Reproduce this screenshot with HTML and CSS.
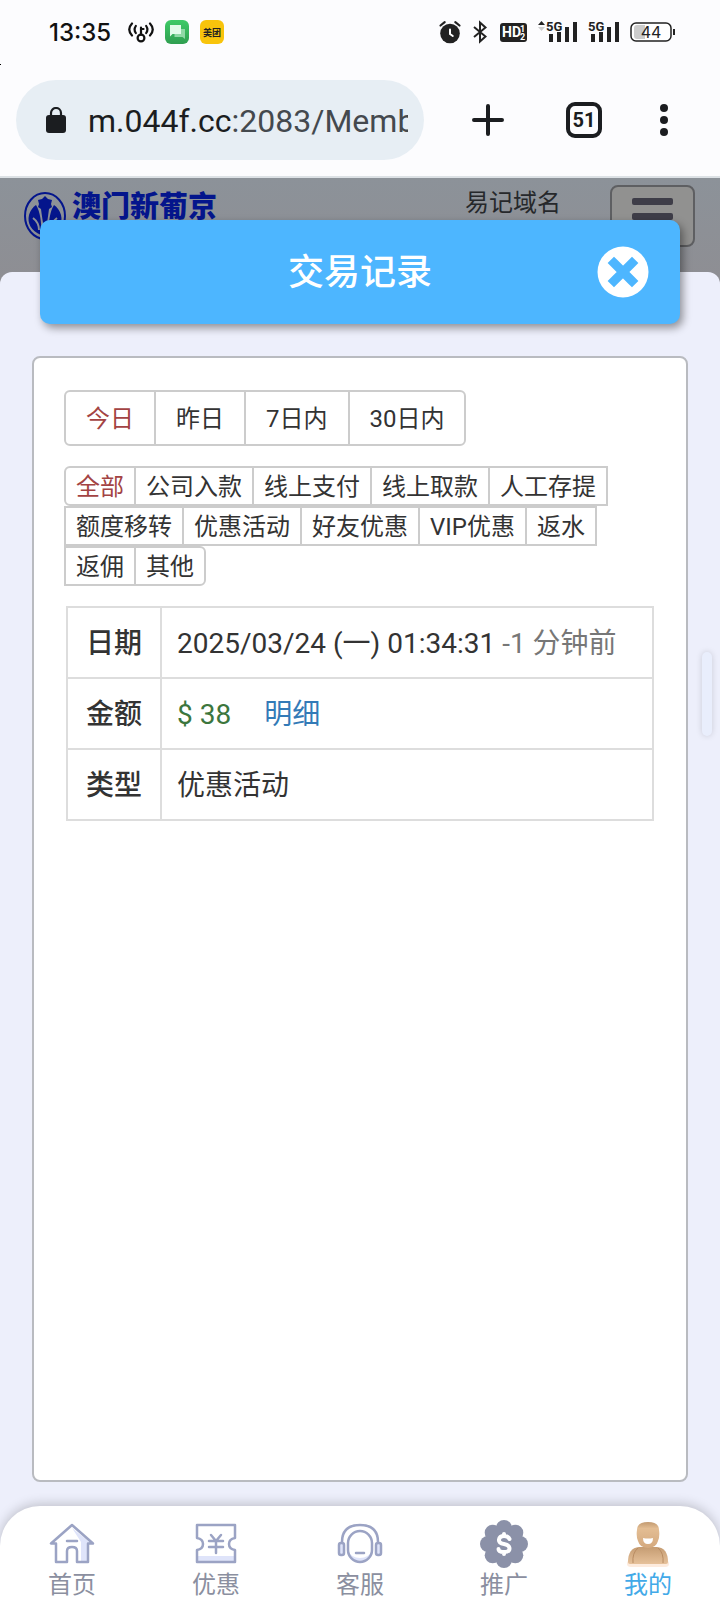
FILE: index.html
```html
<!DOCTYPE html>
<html lang="zh-CN">
<head>
    <meta charset="UTF-8">
    <meta name="viewport" content="width=device-width, initial-scale=1.0">
    <title>交易记录</title>
    <link rel="stylesheet" href="styles.css">
</head>
<body>
    <div class="status-bar">
        <span class="time">13:35</span>
        <svg class="icon-key" width="26" height="24" viewBox="0 0 26 24" fill="none" stroke="#111" stroke-width="2.200" stroke-linecap="round">
            <circle cx="13" cy="18" r="3.400"/>
            <path d="M13 14.500V7.500M13 9h2.500"/>
            <path d="M7.800 6q-2.400 3.500 0 7M18.200 6q2.400 3.500 0 7M4 3.500q-5.500 6 0 12M22 3.500q5.500 6 0 12"/>
        </svg>
        <svg width="24" height="24" viewBox="0 0 24 24">
            <defs>
                <linearGradient id="chat" x1="0" y1="0" x2="0" y2="1">
                    <stop offset="0" stop-color="#3fcb67"/>
                    <stop offset="1" stop-color="#2f9e50"/>
                </linearGradient>
            </defs>
            <rect width="24" height="24" rx="6" fill="url(#chat)"/>
            <path d="M9.500 9h10.500v10l-2.500-2h-8z" fill="#8fd9a5"/>
            <path d="M5 5h11v9H7.500L5 16.500z" fill="#e2fbe9"/>
        </svg>
        <svg width="24" height="24" viewBox="0 0 24 24">
            <rect width="24" height="24" rx="6" fill="#f8c40c"/>
            <text class="app-text" x="12" y="16" text-anchor="middle">美团</text>
        </svg>
        <div class="status-right">
            <svg width="24" height="24" viewBox="0 0 24 24">
                <circle cx="12" cy="13.500" r="9.800" fill="#222"/>
                <path d="M2.500 5.500l4.200-3.300M21.500 5.500l-4.200-3.300" stroke="#222" stroke-width="2.200" stroke-linecap="round"/>
                <path d="M12 9.500v4.500l2.800 2" stroke="#fff" stroke-width="2" fill="none" stroke-linecap="round"/>
            </svg>
            <svg width="16" height="24" viewBox="0 0 16 24" fill="none" stroke="#222" stroke-width="2">
                <path d="M2 7l11.500 9.500L8 21.500v-19L13.500 7.500 2 17"/>
            </svg>
            <svg width="30" height="24" viewBox="0 0 30 24">
                <rect x="2" y="3" width="27" height="19" rx="3" fill="#222"/>
                <text class="hd-text" x="4" y="17">HD</text>
                <text class="hd-small" x="22" y="12">1</text>
                <text class="hd-small" x="22" y="20">2</text>
            </svg>
            <svg width="40" height="24" viewBox="0 0 40 24">
                <path d="M0 5l3.500-4L7 5z" fill="#222"/>
                <path d="M0 7h7l-3.500 4z" fill="#ccc"/>
                <text class="net-text" x="8" y="11">5G</text>
                <path d="M11 14h4v8h-4zM19 12h4v10h-4zM27 7h4v15h-4zM35 2h4v20h-4z" fill="#222"/>
            </svg>
            <svg width="32" height="24" viewBox="0 0 32 24">
                <text class="net-text" x="0" y="11">5G</text>
                <path d="M3 14h4v8H3zM11 12h4v10h-4zM19 7h4v15h-4zM27 2h4v20h-4z" fill="#222"/>
            </svg>
            <svg width="46" height="24" viewBox="0 0 46 24">
                <rect x="1" y="3" width="40" height="18" rx="5" fill="#fff" stroke="#222" stroke-width="1.500"/>
                <path d="M7 5h8v14H7q-3 0-3-3V8q0-3 3-3z" fill="#ccc"/>
                <path d="M44 9v6" stroke="#222" stroke-width="2"/>
                <text class="battery-text" x="21" y="18" text-anchor="middle">44</text>
            </svg>
        </div>
    </div>

    <div class="toolbar">
        <div class="address">
            <svg width="20" height="26" viewBox="0 0 20 26">
                <path d="M5 10V6a5 5 0 0 1 10 0v4" fill="none" stroke="#1b1d20" stroke-width="2.200"/>
                <rect y="8" width="20" height="18" rx="3" fill="#1b1d20"/>
            </svg>
            <span class="url">m.044f.cc<span class="path">:2083/Memb</span></span>
        </div>
        <button class="tool" aria-label="新标签页">
            <svg width="32" height="32" viewBox="0 0 32 32" stroke="#1b1d20" stroke-width="4" stroke-linecap="round">
                <path d="M16 2v28M2 16h28"/>
            </svg>
        </button>
        <button class="tool"><span class="tab-count">51</span></button>
        <button class="tool tool-menu" aria-label="菜单">
            <svg width="8" height="32" viewBox="0 0 8 32" fill="#1b1d20">
                <circle cx="4" cy="4" r="4"/>
                <circle cx="4" cy="16" r="4"/>
                <circle cx="4" cy="28" r="4"/>
            </svg>
        </button>
    </div>

    <header class="site-header">
        <a class="logo" href="#">
            <svg width="42" height="48" viewBox="0 0 42 48">
                <ellipse cx="21" cy="24" rx="20" ry="23" fill="none" stroke="#04158c" stroke-width="2"/>
                <path d="M21 4l3 3 4 1-1 4 1 3-3 2c-1 8-2 15-4 23-2-8-3-15-4-23l-3-2 1-3-1-4 4-1z" fill="#04158c"/>
                <path d="M12 13c4 6 6 18 5 30C7 39 3 31 5 23c1-4 4-8 7-10zM30 13c-4 6-6 18-5 30 10-4 14-12 12-20-1-4-4-8-7-10z" fill="#04158c"/>
                <path d="M9 26c4 3 6 7 6 12M33 26c-4 3-6 7-6 12" stroke="#8d9198" stroke-width="2" fill="none"/>
            </svg>
            <span>澳门新葡京</span>
        </a>
        <a class="domain" href="#">易记域名</a>
        <button class="hamburger" aria-label="导航">
            <span></span><span></span><span></span>
        </button>
    </header>

    <main class="sheet">
        <div class="title-bar">
            <h1>交易记录</h1>
            <button class="close" aria-label="关闭">
                <svg width="52" height="52" viewBox="0 0 52 52">
                    <circle cx="26" cy="26" r="25.500" fill="#fff"/>
                    <path d="M17 17l18 18M35 17L17 35" stroke="#4db6ff" stroke-width="9" stroke-linecap="square" stroke-linejoin="round"/>
                </svg>
            </button>
        </div>

        <div class="panel">
            <div class="btn-group days">
                <button class="active">今日</button><button>昨日</button><button>7日内</button><button>30日内</button>
            </div>
            <div class="btn-group types">
                <button class="active">全部</button><button>公司入款</button><button>线上支付</button><button>线上取款</button><button>人工存提</button><button>额度移转</button><button>优惠活动</button><button>好友优惠</button><button>VIP优惠</button><button>返水</button><button>返佣</button><button>其他</button>
            </div>
            <table class="record">
                <tr>
                    <th scope="row">日期</th>
                    <td>2025/03/24 (一) 01:34:31 <span class="ago">-1 分钟前</span></td>
                </tr>
                <tr>
                    <th scope="row">金额</th>
                    <td><span class="amount">$ 38</span><a class="detail" href="#">明细</a></td>
                </tr>
                <tr>
                    <th scope="row">类型</th>
                    <td>优惠活动</td>
                </tr>
            </table>
        </div>
        <div class="side-handle"></div>
    </main>

    <nav class="tab-bar">
        <a href="#">
            <svg width="48" height="48" viewBox="0 0 48 48" fill="none" stroke="#9ba3c4" stroke-width="2.500" stroke-linejoin="round" stroke-linecap="round">
                <path d="M24 8l20 16h-4v18h-7V22z" fill="#dfe4fa" stroke="none"/>
                <path d="M24 5L3 23.500h5V42h11V31q0-4 5-4t5 4v11h11V23.500h5z"/>
                <path d="M19 21h10"/>
            </svg>
            首页
        </a>
        <a href="#">
            <svg width="48" height="48" viewBox="0 0 48 48" fill="none" stroke="#9ba3c4" stroke-width="2.500" stroke-linejoin="round" stroke-linecap="round">
                <path d="M5 36h38v6H5z" fill="#dfe4fa" stroke="none"/>
                <path d="M5 5h38v13q-6 1-6 6t6 6v12H5V30q6-1 6-6t-6-6z"/>
                <path d="M19 15l5 6 5-6M24 21v12M17 21h14M17 27h14"/>
            </svg>
            优惠
        </a>
        <a href="#">
            <svg width="48" height="48" viewBox="0 0 48 48" fill="none" stroke="#9ba3c4" stroke-width="2.500" stroke-linecap="round">
                <path d="M12 30q3 8 12 8t12-8q0 12-12 12T12 30z" fill="#dfe4fa" stroke="none"/>
                <rect x="12" y="11" width="24" height="31" rx="12"/>
                <path d="M6 22C6 11 12 5 24 5s18 6 18 17"/>
                <rect x="3" y="23" width="5" height="12" rx="2" fill="#dfe4fa"/>
                <rect x="40" y="23" width="5" height="12" rx="2" fill="#dfe4fa"/>
                <path d="M20 33h8"/>
            </svg>
            客服
        </a>
        <a href="#">
            <svg width="48" height="48" viewBox="0 0 48 48">
                <g fill="#8b91a8">
                    <circle cx="24" cy="24" r="18"/>
                    <circle cx="24" cy="8" r="8"/>
                    <circle cx="24" cy="40" r="8"/>
                    <circle cx="8" cy="24" r="8"/>
                    <circle cx="40" cy="24" r="8"/>
                    <circle cx="12.700" cy="12.700" r="8"/>
                    <circle cx="35.300" cy="12.700" r="8"/>
                    <circle cx="12.700" cy="35.300" r="8"/>
                    <circle cx="35.300" cy="35.300" r="8"/>
                </g>
                <path d="M29.500 19q-1-3-5.500-3t-5 3.500 5 4.500 5.500 4.500-5.500 3.500-5.500-3M24 14v2M24 32v2" fill="none" stroke="#fff" stroke-width="4" stroke-linecap="round"/>
            </svg>
            推广
        </a>
        <a href="#" class="current">
            <svg width="48" height="48" viewBox="0 0 48 48">
                <defs>
                    <linearGradient id="skin" x1="0" y1="0" x2="0" y2="1">
                        <stop offset="0" stop-color="#c29a70"/>
                        <stop offset=".25" stop-color="#e3bd93"/>
                        <stop offset="1" stop-color="#d4a97e"/>
                    </linearGradient>
                    <linearGradient id="shirt" x1="0" y1="0" x2="0" y2="1">
                        <stop offset="0" stop-color="#c59c72"/>
                        <stop offset="1" stop-color="#e6c19a"/>
                    </linearGradient>
                </defs>
                <path d="M3 44q0-4 4-4h34q4 0 4 4 0 3-4 3H7q-4 0-4-3z" fill="#fdebdd"/>
                <path d="M4 42q0-14 11-15h18q11 1 11 15 0 2-2 2H6q-2 0-2-2z" fill="url(#shirt)"/>
                <path d="M9 43q-1-10 5-15M39 43q1-10-5-15" fill="none" stroke="#b98c62" stroke-width="1"/>
                <path d="M24 2q11 0 11 8 1 6-1 11-2 7-10 7t-10-7q-2-5-1-11 0-8 11-8z" fill="url(#skin)"/>
                <path d="M19 18q5 1 10 0 0 6-5 6t-5-6z" fill="#fff"/>
            </svg>
            我的
        </a>
    </nav>
</body>
</html>
```

FILE: styles.css
```css
* {
    box-sizing: border-box;
}
body {
    margin: 0;
    min-height: 100vh;
    display: flex;
    flex-direction: column;
    font-family: Roboto, "Noto Sans CJK SC", sans-serif;
    font-size: 24px;
    color: #333;
    background-color: #edeffb;
}
button {
    margin: 0;
    padding: 0;
    border: none;
    background: none;
    font: inherit;
    color: inherit;
    cursor: pointer;
}
a {
    text-decoration: none;
    color: inherit;
}
svg {
    display: block;
    flex: none;
}

/* phone status bar */
.status-bar {
    display: flex;
    align-items: center;
    gap: 11px;
    height: 64px;
    padding: 0 44px 0 49px;
    background-color: #fcfcfe;
}
.time {
    font-family: Inter, sans-serif;
    font-weight: 500;
    color: #111;
}
.icon-key {
    margin-left: 6px;
}
.status-right {
    display: flex;
    gap: 10px;
    margin-left: auto;
}
.app-text {
    font-size: 9px;
    font-weight: 700;
    fill: #222;
}
.hd-text {
    font-size: 14px;
    font-weight: 700;
    fill: #fff;
}
.hd-small {
    font-size: 9px;
    font-weight: 700;
    fill: #fff;
}
.net-text {
    font-size: 13px;
    font-weight: 700;
    fill: #222;
}
.battery-text {
    font-family: Inter, sans-serif;
    font-size: 16px;
    fill: #222;
}

/* browser toolbar */
.toolbar {
    display: flex;
    padding: 16px 24px 16px 16px;
    background-color: #fcfcfe;
    border-bottom: 2px solid #dce1e5;
}
/* short dark tick on the left edge */
.toolbar::before {
    content: "";
    position: absolute;
    top: 64px;
    left: 0;
    width: 1px;
    height: 1px;
    background-color: #000;
}
.address {
    flex: 1;
    min-width: 0;
    display: flex;
    align-items: center;
    gap: 22px;
    height: 80px;
    margin-right: 16px;
    padding: 0 16px 0 30px;
    border-radius: 40px;
    background-color: #e7eef4;
}
.url {
    flex: 1;
    min-width: 0;
    overflow: hidden;
    white-space: nowrap;
    font-size: 32px;
    line-height: 40px;
    padding-top: 2px;
    color: #1b1d20;
}
.path {
    color: #44494e;
}
.tool {
    display: flex;
    align-items: center;
    justify-content: center;
    width: 96px;
}
.tool-menu {
    width: 64px;
}
.tab-count {
    width: 36px;
    height: 36px;
    border: 4px solid #1b1d20;
    border-radius: 9px;
    font-size: 20px;
    font-weight: 700;
    line-height: 28px;
    color: #1b1d20;
}

/* dimmed site header */
.site-header {
    display: flex;
    align-items: flex-start;
    height: 106px;
    margin-bottom: -12px;
    padding: 7px 25px 0 24px;
    background: linear-gradient(#8c9299, #8e8e93);
}
.logo {
    display: flex;
    gap: 6px;
    margin: 7px auto 0 0;
    font-size: 29px;
    font-weight: 900;
    line-height: 30px;
    color: #04158c;
}
.domain {
    margin: 4px 49px 0 0;
    line-height: 28px;
    color: #26282b;
}
.hamburger {
    display: flex;
    flex-direction: column;
    align-items: center;
    gap: 8px;
    width: 85px;
    height: 62px;
    padding-top: 11px;
    border: 2px solid #5e5f62;
    border-radius: 8px;
    background-color: #919190;
}
.hamburger span {
    width: 41px;
    height: 7px;
    border-radius: 2px;
    background-color: #3e3d48;
}

/* modal sheet */
.sheet {
    position: relative;
    flex: 1;
    display: flex;
    flex-direction: column;
    padding: 0 32px 24px;
    border-radius: 12px 12px 0 0;
    background-color: #edeffb;
}
.title-bar {
    display: grid;
    grid-template-columns: 1fr auto 1fr;
    align-items: center;
    height: 104px;
    margin: -52px 8px 32px;
    padding: 0 31px;
    border-radius: 10px;
    background-color: #4db6ff;
    box-shadow: 3px 4px 8px rgba(0,0,0,0.4);
}
.title-bar h1 {
    grid-column: 2;
    margin: 0;
    padding-top: 2px;
    font-size: 36px;
    font-weight: 500;
    line-height: 48px;
    color: #fff;
}
.close {
    justify-self: end;
}
.panel {
    flex: 1;
    padding: 32px 30px;
    border: 2px solid #b9bbc0;
    border-radius: 8px;
    background-color: #fff;
}
.side-handle {
    position: absolute;
    top: 380px;
    right: 8px;
    width: 10px;
    height: 84px;
    border-radius: 5px;
    background-color: #e9eefc;
    box-shadow: 0 0 6px rgba(0,0,0,0.15);
}

/* filter buttons */
.btn-group {
    display: flex;
    flex-wrap: wrap;
    margin-bottom: 20px;
}
.btn-group button {
    height: 40px;
    margin-right: -2px;
    padding: 2px 10px 0;
    border: 2px solid #ccc;
    line-height: 34px;
}
.btn-group.days button {
    height: 56px;
    padding: 2px 20px 0;
    line-height: 50px;
}
.btn-group .active {
    color: #a34343;
}
.btn-group button:first-child {
    border-radius: 6px 0 0 6px;
}
.btn-group button:last-child {
    border-radius: 0 6px 6px 0;
}
.types {
    padding-right: 30px;
}

/* record table */
.record {
    width: calc(100% - 4px);
    margin: 0 2px;
    border-collapse: collapse;
    font-size: 28px;
    line-height: 37px;
}
.record th,
.record td {
    padding: 17px 16px 15px;
    border: 2px solid #ddd;
    text-align: left;
}
.record th {
    width: 94px;
    padding-right: 0;
    padding-left: 0;
    text-align: center;
    font-weight: 500;
}
.record td {
    padding-left: 15px;
}
.ago {
    color: #777;
}
.amount {
    margin-right: 33px;
    color: #3c763d;
}
.detail {
    color: #337ab7;
}

/* bottom navigation */
.tab-bar {
    position: relative;
    display: grid;
    grid-template-columns: repeat(5, 1fr);
    height: 106px;
    padding-top: 14px;
    border-radius: 40px 40px 0 0;
    background-color: #fff;
    box-shadow: 0 -2px 12px rgba(0,0,0,0.2);
}
.tab-bar a {
    display: flex;
    flex-direction: column;
    align-items: center;
    line-height: 34px;
    color: #8b8fa0;
}
.tab-bar .current {
    color: #42a9e8;
}
```
